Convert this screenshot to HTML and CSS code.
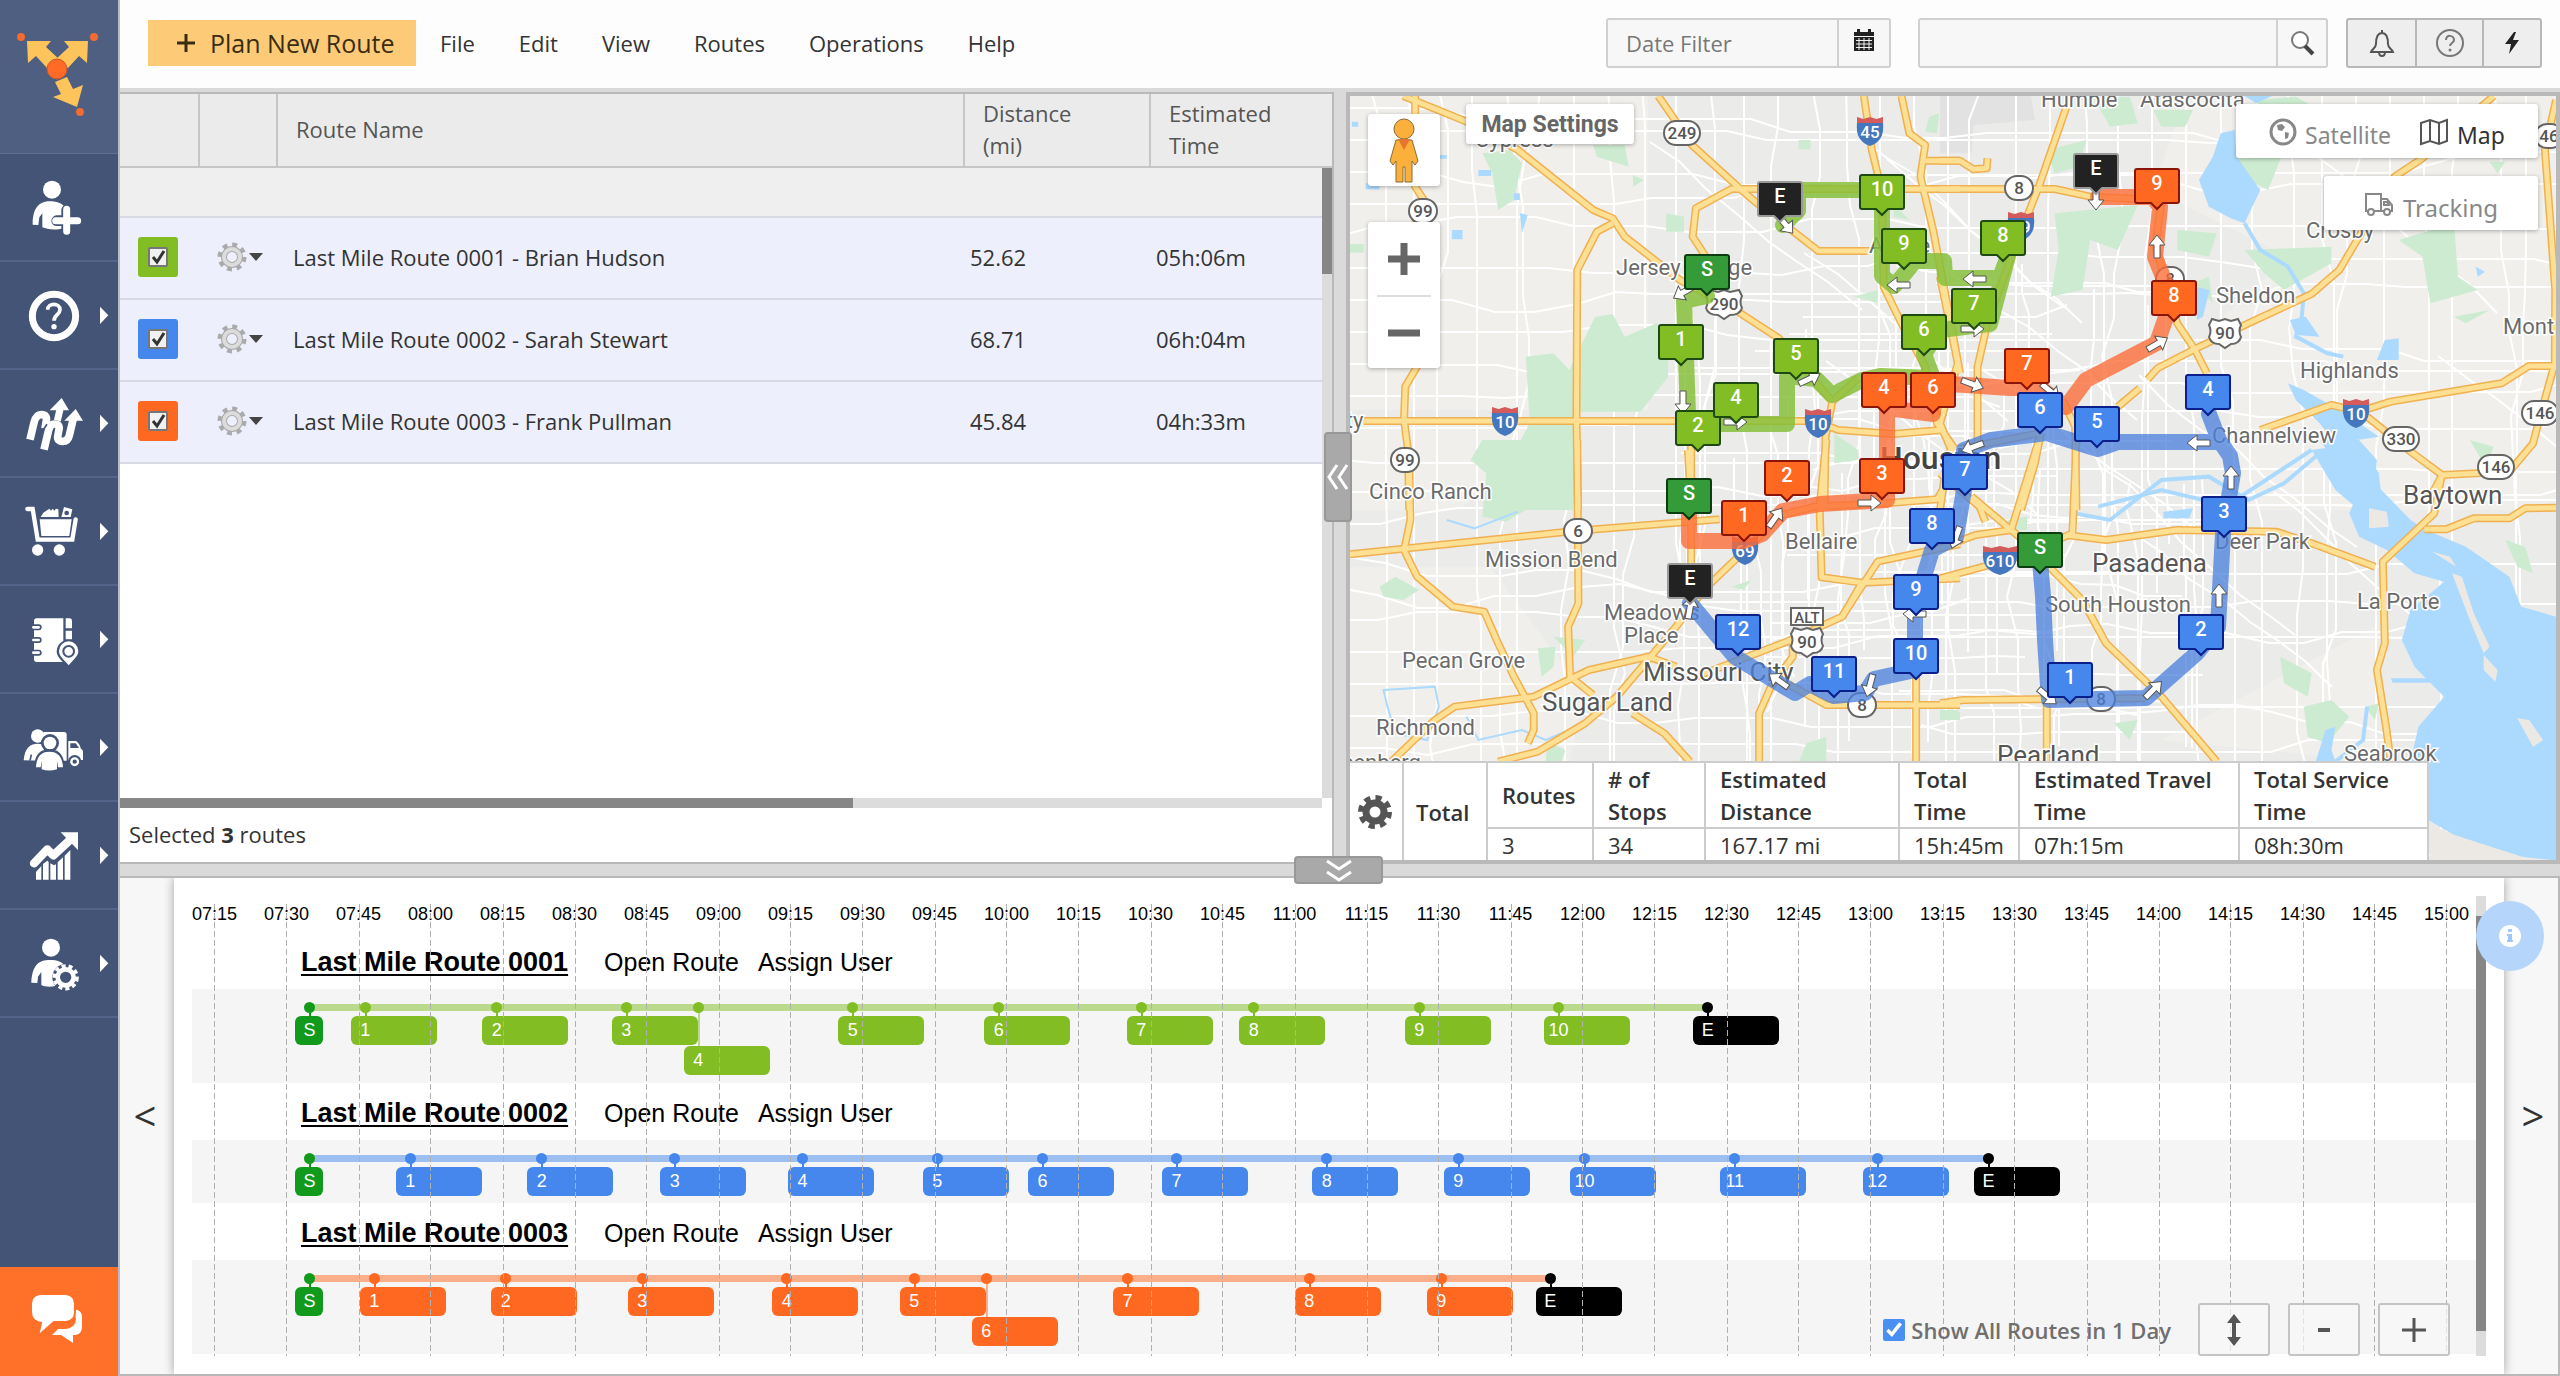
FILE: index.html
```html
<!DOCTYPE html>
<html lang="en">
<head>
<meta charset="utf-8">
<meta name="viewport" content="width=device-width, initial-scale=1">
<title>Route Planner</title>
<link rel="stylesheet" href="styles.css">
</head>
<body>
<nav class="sidebar" aria-label="Main">
  <a class="logo" href="#" aria-label="Home">
    <svg viewBox="0 0 120 154" width="120" height="154">
      <g fill="#fdc45c"><path d="M27 41H51L46 47L60 60L47 68L36 56L28 63Z"/><path d="M88 41H64L69 47L55 60L68 68L79 56L87 63Z"/><path d="M55 82L67 77L73 89L83 85L77 107L53 97L61 94Z"/></g>
      <circle cx="57" cy="69" r="10" fill="#ff6a26" stroke="#c85a2a"/>
      <g fill="#f26b32"><circle cx="21" cy="37" r="4"/><circle cx="94" cy="37" r="4"/><circle cx="80" cy="112" r="4"/></g>
    </svg>
  </a>
  <button class="side-item" aria-label="Add user">
    <svg viewBox="0 0 360 324"><circle cx="156" cy="107" r="27"/><path d="M98 212C98 160 118 142 150 142C172 142 190 150 192 158V190H160V212H190V222C170 230 140 226 127 220V178L118 190L115 213Z"/><g stroke="#445476" stroke-width="32" stroke-linecap="round"><path d="M200 168V232M170 200H232"/></g><g stroke="#fff" stroke-width="21" stroke-linecap="round"><path d="M200 166V232M167 200H233"/></g></svg>
  </button>
  <button class="side-item" aria-label="Help">
    <svg viewBox="0 0 360 324"><circle cx="162" cy="162" r="65" fill="none" stroke="#fff" stroke-width="21"/><path d="M143 143C143 122 180 122 180 143C180 158 162 158 162 176" fill="none" stroke="#fff" stroke-width="11"/><circle cx="162" cy="194" r="8"/><path d="M300 134L325 160L300 186Z"/></svg>
  </button>
  <button class="side-item" aria-label="Routes">
    <svg viewBox="0 0 360 324"><g fill="none" stroke="#fff" stroke-width="23"><path d="M90 209L102 158Q108 134 124 134Q142 134 139 152L135 176"/><path d="M132 239L146 180Q150 162 164 162Q180 162 177 178L173 200Q172 214 188 214Q204 214 208 196L220 146"/><path d="M172 152L180 118" stroke-width="21"/></g><path d="M185 84L207 121H149Z"/><path d="M227 117L249 152H193Z"/><path d="M128 182L141 163" stroke="#445476" stroke-width="5"/><path d="M300 134L325 160L300 186Z"/></svg>
  </button>
  <button class="side-item" aria-label="Orders">
    <svg viewBox="0 0 360 324"><path d="M82 93H98L113 185H217L227 124" fill="none" stroke="#fff" stroke-width="13" stroke-linecap="round"/><path d="M119 124H215L208 174H124Z"/><path d="M122 117L130 104L148 92L153 98L158 92L163 98L168 92L175 94L176 117Z"/><path d="M192 87L217 94L212 117H184Z"/><circle cx="200" cy="105" r="7" fill="#445476"/><circle cx="113" cy="216" r="17"/><circle cx="178" cy="216" r="17"/><path d="M300 134L325 160L300 186Z"/></svg>
  </button>
  <button class="side-item" aria-label="Address book">
    <svg viewBox="0 0 360 324"><path d="M110 97H190V228H110Q102 228 102 220V105Q102 97 110 97ZM197 97H210Q216 98 216 105V127H197ZM197 134H216V160H197Z"/><g stroke="#445476" stroke-width="18" stroke-linecap="round"><path d="M104 124H116M104 162H116M104 200H116"/></g><g stroke="#fff" stroke-width="8" stroke-linecap="round"><path d="M100 124H116M100 162H116M100 200H116"/></g><path d="M206 246C190 228 170 214 170 197A36 36 0 0 1 242 197C242 214 222 228 206 246Z" fill="#445476"/><path d="M206 238C194 222 177 212 177 195A29 29 0 0 1 235 195C235 212 218 222 206 238Z"/><circle cx="206" cy="196" r="16" fill="none" stroke="#445476" stroke-width="6"/><path d="M300 134L325 160L300 186Z"/></svg>
  </button>
  <button class="side-item" aria-label="Team">
    <svg viewBox="0 0 360 324"><path d="M130 114H192Q200 114 200 122V200H130ZM205 141H228Q240 150 242 163L249 170V198H205Z"/><path d="M211 148H227L237 162H211Z" fill="#445476"/><circle cx="224" cy="203" r="20" fill="#445476"/><circle cx="224" cy="203" r="10" fill="none" stroke="#fff" stroke-width="7"/><circle cx="113" cy="126" r="20"/><path d="M71 199C74 160 92 149 113 149C124 149 132 152 138 158L128 200Z"/><path d="M90 200L94 182" stroke="#445476" stroke-width="5"/><circle cx="150" cy="147" r="27" fill="#445476"/><circle cx="150" cy="147" r="19"/><path d="M102 224C102 178 125 166 148 166C172 166 194 178 194 224L148 238Z" fill="#445476"/><path d="M108 220C110 184 126 173 148 173C170 173 187 184 189 220H174L171 200V226C155 231 140 231 125 226V200L122 220Z"/><path d="M300 134L325 160L300 186Z"/></svg>
  </button>
  <button class="side-item" aria-label="Analytics">
    <svg viewBox="0 0 360 324"><path d="M102 184L142 142L160 160L212 112" fill="none" stroke="#fff" stroke-width="25" stroke-linecap="round" stroke-linejoin="round"/><path d="M182 91H234V144Z"/><path d="M108 210L124 192V233H108ZM129 186L142 176L146 180V233H129ZM151 184L162 190L168 187V233H151ZM173 181L189 166V233H173ZM194 161L211 144V233H194Z"/><path d="M300 134L325 160L300 186Z"/></svg>
  </button>
  <button class="side-item" aria-label="Account settings">
    <svg viewBox="0 0 360 324"><circle cx="153" cy="113" r="27"/><path d="M94 218C96 166 116 150 150 150C172 150 188 156 192 166L160 200L166 228C150 232 132 230 124 225V186L114 200L112 219Z"/><circle cx="197" cy="202" r="40" fill="#445476"/><circle cx="197" cy="202" r="24" fill="none" stroke="#fff" stroke-width="14"/><circle cx="197" cy="202" r="34" fill="none" stroke="#fff" stroke-width="11" stroke-dasharray="12 9"/><path d="M300 134L325 160L300 186Z"/></svg>
  </button>
  <button class="chat" aria-label="Chat">
    <svg viewBox="0 0 120 109"><path d="M74 42Q82 43 82 50V60Q82 67 75 68H73V76L61 68H52L58 62H66Q76 60 76 52Z"/><path d="M40 27H66Q75 28 75 37V45Q75 54 66 55H54L38 69L41 56Q31 54 31 45V37Q31 28 40 27Z" stroke="#ff7029" stroke-width="2"/></svg>
  </button>
</nav>

<div class="main">
  <header class="topbar">
    <button class="plan"><svg viewBox="0 0 20 20" width="20" height="20"><path d="M10 1V19M1 10H19" stroke="#3a2c10" stroke-width="3"/></svg>Plan New Route</button>
    <nav class="menu" aria-label="Menu bar">
      <a href="#">File</a><a href="#">Edit</a><a href="#">View</a><a href="#">Routes</a><a href="#">Operations</a><a href="#">Help</a>
    </nav>
    <div class="tools">
      <div class="field date">
        <input type="text" placeholder="Date Filter" aria-label="Date Filter">
        <button aria-label="Open calendar"><svg viewBox="0 0 22 24" width="22" height="24"><path d="M1 4H4V1H7V4H15V1H18V4H21V8H1ZM1 9H21V23H1Z" fill="#222"/><path d="M3 12.500H19M3 16H19M3 19.500H19M6 10V22M11 10V22M16 10V22" stroke="#f2f2f2" stroke-width="1"/></svg></button>
      </div>
      <div class="field search">
        <input type="text" aria-label="Search">
        <button aria-label="Search"><svg viewBox="0 0 26 26" width="26" height="26"><circle cx="11" cy="10" r="8" fill="#fff" stroke="#777" stroke-width="2"/><path d="M16 16L24 24" stroke="#444" stroke-width="4"/></svg></button>
      </div>
      <div class="group">
        <button aria-label="Notifications"><svg viewBox="0 0 28 30" width="28" height="30"><path d="M14 2V5M14 5C8 5 8 12 8 16C8 20 4 21 3 24H25C24 21 20 20 20 16C20 12 20 5 14 5ZM11 24Q11 28 14 28Q17 28 17 24" fill="none" stroke="#555" stroke-width="2"/></svg></button>
        <button aria-label="Help"><svg viewBox="0 0 30 30" width="30" height="30"><circle cx="15" cy="15" r="13" fill="none" stroke="#777" stroke-width="2"/><path d="M11 12C11 6 19 7 19 12C19 15 15 15 15 18" fill="none" stroke="#777" stroke-width="2"/><circle cx="15" cy="22" r="1.500" fill="#777"/></svg></button>
        <button aria-label="Quick actions"><svg viewBox="0 0 20 24" width="20" height="24"><path d="M12 1L3 13H9L7 23L17 9H11L14 1Z" fill="#222"/></svg></button>
      </div>
    </div>
  </header>

  <div class="work">
    <section class="routes">
      <div class="table-wrap">
        <table class="route-table">
          <colgroup><col class="c-check"><col class="c-gear"><col><col class="c-dist"><col class="c-time"></colgroup>
          <thead>
            <tr><th></th><th></th><th>Route Name</th><th>Distance<br>(mi)</th><th>Estimated<br>Time</th></tr>
          </thead>
          <tbody id="route-rows">
            <tr class="filter"><td colspan="5"></td></tr>
          </tbody>
        </table>
        <div class="vscroll"><div></div></div>
      </div>
      <div class="hscroll"><div></div></div>
      <p class="selected">Selected <b>3</b> routes</p>
    </section>
    <div class="splitter"><button aria-label="Collapse list"><svg viewBox="0 0 24 28" width="24" height="28"><path d="M11 2L3 14L11 26M21 2L13 14L21 26" fill="none" stroke="#fff" stroke-width="3"/></svg></button></div>
    <section class="map">
      <svg class="map-canvas" viewBox="0 0 1206 764" preserveAspectRatio="xMidYMid slice">
        <defs>
          <g id="highways">
            <g class="tile nw">
              <path d="M160 18L320 95L450 180L640 360L690 385L720 440L860 570L1000 660L1110 745L1245 935"/>
              <path d="M805 18L850 95L890 165L1020 305L1060 345"/>
              <path d="M190 18V290L212 330L185 420L200 820L165 890L162 990L172 1080L175 1260"/>
              <path d="M1568 297H990L900 355L892 440L925 500"/>
              <path d="M880 1080L888 1260"/>
              <path d="M690 400L650 425L600 540L598 990L602 1260"/>
              <path d="M60 993H1200L1260 1020L1400 1032L1520 1020L1500 950"/>
              <path d="M1325 18L1345 180L1370 300L1375 590L1420 700L1480 830L1510 1000L1568 1100"/>
              <path d="M1420 18L1440 130L1480 165L1468 260L1500 420L1545 700L1568 850"/>
              <path d="M1480 212H1568"/>
              <path d="M1310 865L1245 935L1228 1040L1225 1260"/>
              <path class="minor" d="M1120 400L1210 483H1340"/>
            </g>
            <g class="tile ne">
              <path d="M0 212H50L85 238L118 235L120 205"/>
              <path d="M320 50L250 290L180 500L120 700L95 830V1080"/>
              <path d="M0 297H290L380 320L560 330L545 470L600 700L645 780L675 850"/>
              <path d="M450 950L505 895M525 868L550 835L640 780L780 700L940 612L1010 540L1055 450L1150 260L1220 205L1400 18"/>
              <path d="M810 1020L990 945L1060 965L1140 935L1420 880L1490 828H1558"/>
              <path d="M1080 980L1190 1085L1270 1155L1440 1145L1500 1060L1515 990L1555 820L1556 600L1530 180L1558 30"/>
              <path d="M1270 1155L1245 1210"/>
              <path d="M310 930L342 1010L345 1260"/>
              <path d="M255 1030L240 1120L205 1260"/>
              <path d="M0 560L45 820L0 1000L30 1085"/>
              <path d="M0 1260L20 1090L60 1075L250 1030"/>
            </g>
            <g class="tile sw">
              <path d="M175 60L178 240L162 330L195 410L285 500L365 515L400 610L440 710L490 820V870L475 910"/>
              <path d="M25 343L600 272L960 238"/>
              <path d="M600 0L603 490L577 560L582 710L640 765"/>
              <path d="M1110 225L1060 290L920 450L850 560L700 770L620 850L500 935L400 965"/>
              <path d="M888 0V480"/>
              <path d="M130 965L240 840L290 800L490 770L630 690L780 650L850 680"/>
              <path d="M900 710L1130 605L1270 530L1360 365L1568 312"/>
              <path d="M740 820L820 880L885 965"/>
              <path d="M1060 965V820L1090 740L1145 650V600"/>
              <path d="M1130 730L1230 795H1568"/>
              <path d="M1457 690V965"/>
              <path d="M1230 0L1213 200L1218 412L1320 428L1568 415"/>
              <path d="M1320 428L1270 530"/>
              <path d="M1100 230L1200 200L1380 190L1510 178L1550 100"/>
            </g>
            <g class="tile se">
              <path d="M0 790L60 780L520 775"/>
              <path d="M270 790V965"/>
              <path d="M80 170L200 290L360 480L420 610L560 770L700 965"/>
              <path d="M0 325L90 285L180 270L250 0"/>
              <path d="M0 415L110 380L200 350L335 280L345 0"/>
              <path d="M320 285L420 300L600 270L850 275L940 310L1100 380"/>
              <path d="M1270 100L1250 220L1120 365L1125 610L1105 690L1128 860L1140 965"/>
              <path d="M1225 268H1280L1350 235H1440L1480 205L1558 203"/>
              <path d="M0 100L100 200L115 245"/>
            </g>
          </g>
        </defs>
        <rect width="1206" height="764" fill="#ebebea"/>
        <g class="tile nw" fill="#f0efec"><path d="M0 0H780V960H0Z"/><path d="M0 1000H560L300 1260H0Z"/></g>
        <g class="tile ne" fill="#f0efec"><path d="M620 18H1568V1260H760L700 700L880 500L540 300Z"/></g>
        <g class="tile sw" fill="#f0efec"><path d="M0 380H380L620 760L580 965H0Z"/></g>
        <g class="tile se" fill="#f0efec"><path d="M560 900L1100 560L1100 965Z"/></g>
        <g class="tile ne" fill="#e2e2e3"><path d="M0 18H230L240 90L85 105L80 190H0Z"/></g>
        <g id="streets" class="streets"></g>
        <g class="green">
          <g class="tile nw">
            <path d="M645 680L690 672L720 740L800 700L830 720V860L760 965H600L590 1260H360L480 1000L470 800L540 790L580 840Z"/>
            <path d="M360 190L430 180L460 220L440 330L400 360L385 250Z"/><path d="M640 165H720L730 230L650 200Z"/><path d="M825 370L870 380V425H825Z"/><path d="M740 255L768 270L742 290Z"/><path d="M1490 80L1515 70L1510 130L1480 125Z"/><path d="M1400 340L1440 390L1400 380Z"/><path d="M1250 1030L1310 1080V1110L1250 1120Z"/><path d="M25 462H60V488H25Z"/><path d="M1160 150H1190V178H1160Z"/><path d="M1300 620L1360 600V640Z"/>
          </g>
          <g class="tile ne">
            <path d="M390 25L480 20L500 100L430 110Z"/><path d="M270 180L370 150L350 230L290 250Z"/><path d="M290 370L500 345L450 480L380 450L360 600L280 620L300 480Z"/><path d="M540 60H640L620 110H560Z"/><path d="M760 120L860 70L980 100L970 170L870 180L830 300L740 250Z"/><path d="M770 480L990 470V520L870 600L820 550Z"/><path d="M800 30L900 20L960 60L820 80Z"/><path d="M1160 450L1300 400L1310 560L1360 600L1240 640L1220 500Z"/><path d="M1300 680L1390 660L1330 700Z"/><path d="M600 420L700 430L680 500L600 480Z"/><path d="M640 580L680 560L690 640Z"/><path d="M1390 215H1430L1410 250Z"/><path d="M1340 1050L1400 1070L1380 1130Z"/>
          </g>
          <g class="tile sw">
            <path d="M590 0H360L330 60L370 100L360 230L420 245L540 160L590 100Z"/><path d="M100 440L140 410L200 450L160 480L110 470Z"/><path d="M500 625L545 620L540 680L510 710Z"/><path d="M540 590L620 600L590 650Z"/><path d="M1180 910L1230 890V965H1160Z"/><path d="M990 440L1040 420L1020 450Z"/><path d="M525 905L570 930L560 965H520Z"/><path d="M1525 815H1568V840H1530Z"/>
          </g>
          <g class="tile se">
            <path d="M860 650L940 700L930 770L870 730Z"/><path d="M920 800L990 780L1035 830L980 910L930 890Z"/><path d="M1050 50L1100 70L1070 120L1040 100Z"/><path d="M440 850L500 840L480 900Z"/><path d="M1430 300L1480 320L1500 400L1460 380Z"/><path d="M170 240L220 230V270H180Z"/><path d="M0 810H45V840H0Z"/><path d="M1075 800L1110 790L1100 840Z"/>
          </g>
        </g>
        <g class="water">
          <g class="tile ne">
            <path d="M710 130L745 120L750 200L810 300L770 400L735 385L680 350L655 270L690 200Z"/><path d="M770 18H840L800 40Z"/><path d="M880 880L920 900L1010 960L1110 1040L1000 1060L960 1000L900 930Z"/><path d="M940 1080L1060 1060L1110 1150L1120 1260H1060L1000 1200Z"/><path d="M885 690L925 680L960 740L900 735Z"/><path d="M1125 750L1160 745V810L1105 810Z"/><path d="M1355 530L1378 545L1360 560Z"/><path d="M645 590L682 600L665 680L650 690Z"/>
            <path class="river" d="M770 400L810 480L880 530L920 610L915 680L900 740L980 790L1020 800"/><path class="river" d="M940 1080L850 1150L760 1220L700 1240L560 1200L400 1250"/>
          </g>
          <g class="tile se">
            <path d="M960 0H1060L1105 60L1100 130L1190 240L1230 270L1330 320L1440 410L1470 500L1558 530V1262L1470 1250L1300 1185L1235 1140V965H1190L1210 860L1275 770L1200 680L1168 600L1190 510L1275 425L1200 400L1130 330L1060 290L1035 220L1060 150L1020 100Z"/>
            <path d="M1140 715H1240V728H1145Z"/><path d="M975 870L1000 860L990 930L1000 965H950Z"/><path d="M565 215L640 205L630 235H565Z"/>
            <path class="river" d="M340 220L430 240L560 120L680 110L780 180L870 130L960 40"/><path class="river" d="M1080 800L1070 900L1000 965"/>
          </g>
          <g class="tile nw">
            <path d="M283 420H310V448H283ZM30 95H46V110H30ZM350 240H382V258H350ZM455 370L475 375L460 430Z"/><path d="M65 280H100V298H65Z"/><path d="M245 195H270V206H245ZM440 310H455V330H440Z"/>
          </g>
          <g class="tile sw">
            <path class="river thin" d="M110 750L240 740L250 800L220 900L140 880L120 800Z"/><path class="river thin" d="M320 830L350 900L460 870L520 900L600 860"/><path class="river thin" d="M270 240L340 265L450 215"/>
          </g>
        </g>
        <g class="tile se" fill="#ece9e4"><path d="M1085 205L1130 215L1135 260L1085 265Z"/><path d="M1295 400L1320 410L1350 520L1390 620L1375 640L1340 540Z"/><path d="M1375 645L1410 690L1405 725L1375 690Z"/><path d="M1245 335L1290 350L1305 380Z"/><path d="M1460 835L1490 840L1525 900L1500 920Z"/><path d="M1235 1200V1150L1300 1185L1470 1250L1500 1262H1240Z"/></g>
        <use href="#highways" class="casing"/>
        <use href="#highways" class="surface"/>
        <g class="labels">
          <text x="125" y="51">Cypress</text><text x="266" y="179">Jersey Village</text><text x="19" y="403">Cinco Ranch</text><text x="135" y="471">Mission Bend</text>
          <text x="254" y="524">Meadows</text><text x="274" y="547">Place</text><text x="435" y="453">Bellaire</text><text x="52" y="572">Pecan Grove</text><text x="26" y="639">Richmond</text>
          <text x="-34" y="674">Rosenberg</text><text x="-30" y="332">Katy</text><text x="519" y="157">Aldine</text><text x="691" y="11">Humble</text><text x="790" y="11">Atascocita</text>
          <text x="956" y="142">Crosby</text><text x="866" y="207">Sheldon</text><text x="1153" y="238">Mont</text><text x="950" y="282">Highlands</text><text x="862" y="347">Channelview</text>
          <text x="865" y="453">Deer Park</text><text x="695" y="516">South Houston</text><text x="1007" y="513">La Porte</text><text x="994" y="665">Seabrook</text>
          <g class="town"><text x="293" y="585">Missouri City</text><text x="192" y="615">Sugar Land</text><text x="742" y="476">Pasadena</text><text x="1053" y="408">Baytown</text><text x="647" y="668">Pearland</text></g>
          <text class="city" x="530" y="373">Houston</text>
        </g>
        <g id="shields" class="shields"></g>
        <g class="trips">
          <path class="t1" d="M433 129L448 115V94H532V180L544 190L556 176L565 165H594L595 182H650L658 160L640 228L590 234L574 258L583 282L530 280L512 284L482 299L466 283L437 280V328H350L338 318L334 205L357 200"/>
          <path class="t3" d="M339 418V445H394L412 438L433 415L470 408L537 404V312L583 318L580 296L600 288L660 292L690 292L716 311L736 284L807 247L815 224L820 198L805 161L810 111L803 101H748"/>
          <path class="t2" d="M690 465L693 500L695 544L699 604L796 602L847 557L868 531L873 437L883 377L880 360L869 344L859 318M867 346H768L748 353L697 337L641 344L614 354V394L606 441L582 454L575 477L565 511V574L524 583L515 597L484 600L460 588L445 597L385 561L340 507"/>
        </g>
        <g id="arrows" class="arrows"></g>
        <g id="pins" class="pins"></g>
      </svg>

      <div class="map-left">
        <div class="map-tools">
          <button class="pegman" aria-label="Street View"><svg viewBox="0 0 32 66" width="32" height="66"><g fill="#fbb03b" stroke="#8a6a35" stroke-width="1"><path d="M8 23H24L30 44L27 48L24 44V65H17V50H15V65H8V44L5 48L2 44Z"/><circle cx="16" cy="12" r="10"/></g><path d="M10 22H22L16 33Z" fill="#e5762c"/></svg></button>
          <div class="zoom">
            <button aria-label="Zoom in"><svg viewBox="0 0 32 32" width="32" height="32"><path d="M16 0V32M0 16H32" stroke="#666" stroke-width="7"/></svg></button>
            <button aria-label="Zoom out"><svg viewBox="0 0 32 32" width="32" height="32"><path d="M0 16H32" stroke="#666" stroke-width="7"/></svg></button>
          </div>
        </div>
        <button class="settings">Map Settings</button>
      </div>
      <div class="map-right">
        <div class="layers">
          <button><svg viewBox="0 0 28 28" width="28" height="28"><circle cx="14" cy="14" r="12" fill="none" stroke="#888" stroke-width="3"/><path d="M8 7L13 6L16 9L13 13L9 12ZM16 14L20 15L19 20L16 21Z" fill="#888"/></svg>Satellite</button>
          <button class="on"><svg viewBox="0 0 30 28" width="30" height="28"><path d="M2 5L11 2L20 5L28 2V23L20 26L11 23L2 26ZM11 2V23M20 5V26" fill="none" stroke="#555" stroke-width="2"/></svg>Map</button>
        </div>
        <button class="tracking"><svg viewBox="0 0 30 24" width="30" height="24"><path d="M5 19H2V2H17V19H10M17 7H23L28 13V19H26M21 19H17M20 10H23L25 13H20Z" fill="none" stroke="#888" stroke-width="2"/><circle cx="7" cy="20" r="3" fill="#fff" stroke="#888" stroke-width="2"/><circle cx="23" cy="20" r="3" fill="#fff" stroke="#888" stroke-width="2"/></svg>Tracking</button>
      </div>

      <table class="summary">
        <tr>
          <th rowspan="2" class="s-gear"><button aria-label="Summary settings"><svg viewBox="0 0 36 36" width="36" height="36"><circle cx="18" cy="18" r="9" fill="none" stroke="#555" stroke-width="7"/><circle cx="18" cy="18" r="14" fill="none" stroke="#555" stroke-width="6" stroke-dasharray="6 5"/></svg></button></th>
          <th rowspan="2" class="s-total">Total</th><th class="s-routes">Routes</th><th class="s-stops"># of Stops</th><th class="s-dist">Estimated Distance</th><th class="s-time">Total Time</th><th class="s-travel">Estimated Travel Time</th><th class="s-service">Total Service Time</th>
        </tr>
        <tr><td>3</td><td>34</td><td>167.17 mi</td><td>15h:45m</td><td>07h:15m</td><td>08h:30m</td></tr>
      </table>
    </section>
  </div>

  <div class="hsplit"><button aria-label="Collapse timeline"><svg viewBox="0 0 28 26" width="28" height="26"><path d="M2 3L14 11L26 3M2 14L14 22L26 14" fill="none" stroke="#fff" stroke-width="3"/></svg></button></div>

  <section class="timeline">
    <button class="pan prev" aria-label="Earlier">&lt;</button>
    <div class="board">
      <div class="chart">
        <div class="hours" id="hours"></div>
        <div id="lanes"></div>
        <div class="chart-tools">
          <label><input type="checkbox" checked>Show All Routes in 1 Day</label>
          <button aria-label="Fit height"><svg viewBox="0 0 16 32" width="16" height="32"><path d="M8 0L15 9H10V23H15L8 32L1 23H6V9H1Z" fill="#555"/></svg></button>
          <button aria-label="Zoom out"><svg viewBox="0 0 24 24" width="24" height="24"><path d="M6 12H18" stroke="#555" stroke-width="4"/></svg></button>
          <button aria-label="Zoom in"><svg viewBox="0 0 24 24" width="24" height="24"><path d="M12 0V24M0 12H24" stroke="#555" stroke-width="3"/></svg></button>
        </div>
      </div>
      <div class="chart-scroll"><div></div></div>
    </div>
    <button class="pan next" aria-label="Later">&gt;</button>
    <button class="info" aria-label="Information"><svg viewBox="0 0 22 22" width="22" height="22"><circle cx="11" cy="11" r="11" fill="#fff"/><path d="M9 4H13V7H9ZM8 9H13V15H14V17H8V15H9V11H8Z" fill="#a0c8f6"/></svg></button>
  </section>
</div>
<script src="app.js"></script>
</body>
</html>
```
FILE: styles.css
```css
* { box-sizing: border-box; }
html, body { height: 100%; margin: 0; }
body { display: flex; background: #dadada; color: #333; font-family: "Open Sans", "Noto Sans", sans-serif; font-size: 22px; }
button { font: inherit; color: inherit; border: 0; background: none; padding: 0; cursor: pointer; }
a { color: inherit; text-decoration: none; }
svg { display: block; }

/* sidebar */
.sidebar { flex: 0 0 120px; display: flex; flex-direction: column; background: #445476; border-right: 2px solid #b9bcc6; min-height: 100%; overflow: hidden; }
.logo { background: #4e5f82; border-bottom: 1px solid #5f6f90; height: 154px; }
.side-item { height: 108px; border-bottom: 2px solid #53648a; }
.side-item svg { width: 120px; height: 108px; fill: #fff; }
.chat { height: 109px; margin-top: auto; background: #ff7029; }
.chat svg { width: 120px; height: 109px; fill: #fff; }

/* header */
.main { flex: 1; min-width: 0; display: flex; flex-direction: column; }
.topbar { display: flex; align-items: center; height: 88px; padding: 0 18px 2px 28px; background: #fdfdfd; }
.plan { display: flex; align-items: center; gap: 14px; height: 46px; width: 268px; padding: 0 0 0 28px; background: #fdcb78; color: #3a2c10; font-size: 25px; }
.menu { display: flex; gap: 44px; margin-left: 24px; }
.tools { display: flex; margin-left: auto; height: 50px; }
.field { display: flex; }
.field input { font: inherit; color: #555; background: #f7f7f7; border: 2px solid #d0d0d0; border-radius: 3px 0 0 3px; padding: 0 18px; min-width: 0; }
.field input::placeholder { color: #777; opacity: 1; }
.field button { display: grid; place-items: center; background: #f7f7f7; border: 2px solid #d0d0d0; border-left: 0; border-radius: 0 3px 3px 0; }
.date input { width: 233px; }
.date button { width: 52px; padding-bottom: 6px; }
.search { margin: 0 18px 0 27px; }
.search input { width: 360px; }
.search button { width: 50px; }
.group { display: flex; border: 2px solid #b8b8b8; border-radius: 3px; background: #eee; }
.group button { width: 67px; display: grid; place-items: center; }
.group button + button { border-left: 2px solid #b8b8b8; }
.group button:last-child { width: 58px; }

/* list and map */
.work { flex: 1; min-height: 600px; display: grid; grid-template-columns: minmax(0, 1fr) 12px minmax(0, 1fr); padding-top: 4px; }
.routes { display: flex; flex-direction: column; background: #fff; border: 2px solid #b9b9b9; border-left: 0; min-height: 0; }
.table-wrap { position: relative; flex: 1; }
.route-table { width: 100%; table-layout: fixed; border-collapse: separate; border-spacing: 0; }
.c-check { width: 78px; } .c-gear { width: 78px; } .c-dist { width: 186px; } .c-time { width: 183px; }
.route-table th { height: 74px; padding: 0 18px 2px; background: #ebebeb; border-bottom: 2px solid #c6c6c6; border-left: 2px solid #c6c6c6; font-weight: 400; text-align: left; line-height: 32px; color: #555; }
.route-table th:first-child { border-left: 0; }
.route-table td { height: 82px; padding: 0 7px 2px; background: #edeffd; border-bottom: 2px solid #d8dae3; color: #333; }
.route-table td:nth-child(3) { padding-left: 17px; }
.route-table .filter td { height: 50px; background: #efefef; }
.swatch { display: grid; place-items: center; width: 40px; height: 40px; margin-left: 11px; border-radius: 3px; }
.swatch input { appearance: none; margin: 0; width: 20px; height: 20px; border: 2px solid #777; border-radius: 2px; background: #f1f1f1 url('data:image/svg+xml,<svg xmlns="http://www.w3.org/2000/svg" viewBox="0 0 16 16"><path d="M3 8L7 13L14 2" fill="none" stroke="%23333" stroke-width="3"/></svg>'); }
.row-menu { display: flex; align-items: center; gap: 2px; padding-left: 12px; }
.vscroll { position: absolute; top: 74px; bottom: 0; right: 0; width: 10px; background: #dcdcdc; }
.vscroll div { height: 106px; background: #868686; }
.hscroll { height: 10px; background: #dcdcdc; margin-right: 10px; }
.hscroll div { height: 10px; width: 61%; background: #868686; }
.selected { margin: 0; padding: 10px 9px 0; line-height: 32px; height: 54px; }
.splitter { position: relative; z-index: 3; }
.splitter button { position: absolute; left: -10px; top: 44%; width: 28px; height: 90px; background: #a9a9a9; border: 2px solid #989898; border-radius: 4px; display: grid; place-items: center; }
.map { position: relative; border: 4px solid #b9b9b9; overflow: hidden; }
.map-canvas { position: absolute; inset: 0; width: 100%; height: 100%; }

.tile path { vector-effect: non-scaling-stroke; }
.nw { transform: matrix(.3954, 0, 0, .3333, -10, -6); }
.ne { transform: matrix(.3954, 0, 0, .3333, 590, -6); }
.sw { transform: matrix(.3954, 0, 0, .3333, -10, 344); }
.se { transform: matrix(.3954, 0, 0, .3333, 590, 344); }
.streets { fill: none; stroke: #fff; stroke-width: 2; }
.green { fill: #cdebd0; }
.water { fill: #acdaff; }
.water .river { fill: none; stroke: #acdaff; stroke-width: 4; }
.water .thin { stroke-width: 2; }
.casing, .surface { fill: none; stroke-linejoin: round; }
.casing { stroke: #f0b050; stroke-width: 8; }
.surface { stroke: #fde093; stroke-width: 5; }
.labels text { font: 22px Roboto, sans-serif; fill: #6b6b6b; stroke: #fff; stroke-width: 3; paint-order: stroke; }
.labels .town text { font-size: 26px; fill: #555; }
.labels .city { font-size: 32px; font-weight: 500; fill: #444; }
.shields text { font: 500 17px Roboto, sans-serif; text-anchor: middle; fill: #555; }
.shields .inter { fill: #fff; }
.trips { fill: none; stroke-width: 16; stroke-linejoin: round; stroke-linecap: round; }
.t1 { stroke: #86bf38; stroke-opacity: .84; } .t2 { stroke: #4a7fdb; stroke-opacity: .76; } .t3 { stroke: #fd6a35; stroke-opacity: .78; }
.arrows { fill: #fff; stroke: #555; stroke-width: 1; }
.pins text { font: 500 20px Roboto, sans-serif; fill: #fff; text-anchor: middle; }

.map-left { position: relative; float: left; display: flex; align-items: flex-start; gap: 26px; padding: 8px 0 0 18px; }
.map-tools { display: grid; gap: 36px; padding-top: 10px; }
.pegman, .zoom, .settings, .layers, .tracking { background: #fff; border-radius: 3px; box-shadow: 0 1px 4px rgba(0, 0, 0, .3); }
.pegman { width: 72px; height: 72px; display: grid; place-items: center; padding: 0; }
.zoom { width: 72px; padding: 0 9px; }
.zoom button { width: 54px; height: 73px; display: grid; place-items: center; }
.zoom button + button { border-top: 2px solid #ddd; }
.settings { height: 40px; width: 168px; font: 700 23px Roboto, sans-serif; color: #666; }
.map-right { position: relative; float: right; display: grid; justify-items: end; gap: 18px; padding: 8px 18px 0 0; }
.layers { display: flex; align-items: center; justify-content: center; gap: 28px; width: 302px; height: 54px; padding-top: 8px; color: #888; font-size: 23px; }
.layers button, .tracking { display: flex; align-items: center; gap: 8px; font-family: "Noto Sans", sans-serif; }
.layers .on { color: #333; }
.tracking { width: 214px; height: 54px; justify-content: center; padding-top: 8px; gap: 9px; color: #888; font-size: 24px; }
.layers svg, .tracking svg { margin-bottom: 6px; }

.summary { position: absolute; left: -3px; bottom: -3px; width: 1080px; table-layout: fixed; border-collapse: collapse; background: #fff; line-height: 32px; text-align: left; }
.summary th, .summary td { border: 2px solid #ccc; padding: 0 14px; font-weight: 400; }
.summary th { font-weight: 600; height: 66px; }
.summary td { height: 34px; }
.summary .s-gear { width: 55px; padding: 0; }
.s-gear button { display: grid; place-items: center; width: 52px; }
.summary .s-total { width: 84px; padding: 0 12px; }
.s-routes { width: 106px; } .s-stops { width: 112px; } .s-dist { width: 194px; } .s-time { width: 120px; } .s-travel { width: 220px; } .s-service { width: 189px; }

/* timeline */
.hsplit { position: relative; z-index: 4; height: 12px; }
.hsplit button { position: absolute; left: calc(50% - 46px); top: -8px; width: 89px; height: 28px; background: #a9a9a9; border: 2px solid #989898; border-radius: 4px; display: grid; place-items: center; }
.timeline { position: relative; display: grid; grid-template-columns: 54px minmax(0, 1fr) 54px; border: 2px solid #b9b9b9; border-left: 0; background: #f7f7f7; }
.pan { font-size: 40px; color: #333; padding-bottom: 22px; }
.prev { padding-right: 4px; }
.next { padding-left: 4px; }
.board { display: grid; grid-template-columns: minmax(0, 1fr) 10px; padding: 18px; background: #fff; box-shadow: 0 0 10px rgba(0, 0, 0, .35); clip-path: inset(0 -12px); }
.chart { position: relative; font-family: "Liberation Sans", Arial, sans-serif; color: #000; padding-bottom: 2px; }
.chart-scroll { background: #dcdcdc; padding: 20px 0 25px; }
.chart-scroll div { height: 100%; background: #868686; }
.hours { height: 36px; font-size: 18px; }
.hour { position: absolute; top: 8px; bottom: 0; display: flex; justify-content: center; width: 0; line-height: 20px; z-index: 1; }
.hour::after { content: ""; position: absolute; left: 0; top: 0; bottom: 0; width: 1px; background: repeating-linear-gradient(#b0b0b0 0 6px, transparent 6px 9px); }
.lane-head { display: flex; align-items: center; gap: 19px; height: 57px; padding: 4px 0 0 109px; font-size: 25px; }
.lane-head .name { font-size: 27px; font-weight: 700; text-decoration: underline; text-decoration-thickness: 2px; text-underline-offset: 3px; margin-right: 17px; }
.lane { position: relative; height: 63px; background: #f5f5f5; }
.lane.tall { height: 94px; }
.line { position: absolute; top: 15px; height: 7px; background: var(--c); opacity: .5; }
.stop { position: absolute; top: 13px; width: 86px; margin-left: -15px; padding-top: 14px; }
.stop span { display: block; height: 29px; border-radius: 6px; background: var(--c); color: #fff; font-size: 18px; line-height: 29px; }
.stop span b { display: block; width: 29px; text-align: center; font-weight: 400; }
.stop::before { content: ""; position: absolute; left: 9px; top: 0; width: 11px; height: 11px; border-radius: 50%; background: var(--c); }
.stop::after { content: ""; position: absolute; left: 14px; top: 6px; height: 8px; width: 2px; background: var(--c); }
.stop.low { padding-top: 44px; }
.stop.low::after { height: 38px; opacity: .5; }
.stop.start { width: 28px; --c: #119a1b; }
.stop.end { --c: #000; }
.chart-tools { position: absolute; right: 26px; bottom: 0; z-index: 2; display: flex; align-items: center; gap: 18px; color: #6f6f6f; font-family: "Open Sans", sans-serif; font-weight: 600; }
.chart-tools label { display: flex; align-items: center; gap: 6px; margin-right: 9px; }
.chart-tools input { width: 22px; height: 22px; margin: 0; accent-color: #4a90f2; }
.chart-tools button { width: 72px; height: 53px; display: grid; place-items: center; border: 2px solid #c4c4c4; border-radius: 3px; background: rgba(248, 248, 248, .7); }
.info { position: absolute; right: 14px; top: 23px; z-index: 3; width: 68px; height: 70px; border-radius: 50%; background: #b5d5fa; display: grid; place-items: center; }
```
FILE: app.js
```js
const GREEN = '#82bd24', BLUE = '#4587ed', ORANGE = '#ff6820';

// Route list
const routes = [
  { name: 'Last Mile Route 0001', driver: 'Brian Hudson', miles: '52.62', time: '05h:06m', color: GREEN,
    stops: [19.9, 31.5, 58.9, 85.9, 100.9, 133.1, 163.5, 193.2, 216.6, 251.1, 280.1, 311.2], low: 4 },
  { name: 'Last Mile Route 0002', driver: 'Sarah Stewart', miles: '68.71', time: '06h:04m', color: BLUE,
    stops: [19.9, 40.9, 68.3, 96, 122.6, 150.7, 172.6, 200.5, 231.8, 259.2, 285.5, 316.8, 346.5, 369.7] },
  { name: 'Last Mile Route 0003', driver: 'Frank Pullman', miles: '45.84', time: '04h:33m', color: ORANGE,
    stops: [19.9, 33.4, 60.8, 89.2, 119.3, 145.9, 160.9, 190.3, 228.2, 255.7, 278.4], low: 6 },
];
const gear = '<svg viewBox="0 0 30 30" width="30" height="30"><circle cx="15" cy="15" r="8" fill="none" stroke="#aaa" stroke-width="6"/><circle cx="15" cy="15" r="12" fill="none" stroke="#aaa" stroke-width="5" stroke-dasharray="4.700 4.700"/><circle cx="15" cy="15" r="8" fill="none" stroke="#dcdcdc" stroke-width="4"/></svg>';
document.getElementById('route-rows').insertAdjacentHTML('beforeend', routes.map(r => `
  <tr><td><label class="swatch" style="background:${r.color}"><input type="checkbox" checked aria-label="${r.name}"></label></td>
  <td><button class="row-menu" aria-label="Actions">${gear}<svg viewBox="0 0 14 8" width="14" height="8"><path d="M0 0H14L7 8Z" fill="#444"/></svg></button></td>
  <td>${r.name} - ${r.driver}</td><td>${r.miles}</td><td>${r.time}</td></tr>`).join(''));

// Timeline: minutes after 07:15, one hour is 288 units of the 2284-unit chart
const pos = m => ((m * 4.8 + 22.5) / 2284 * 100).toFixed(3) + '%';
let hours = '';
for (let i = 0; i < 32; i++) {
  const t = 435 + i * 15;
  hours += `<div class="hour" style="left:${pos(i * 15)}">${String(Math.floor(t / 60)).padStart(2, '0')}:${String(t % 60).padStart(2, '0')}</div>`;
}
document.getElementById('hours').innerHTML = hours;
document.getElementById('lanes').innerHTML = routes.map(r => {
  const last = r.stops.length - 1;
  const stops = r.stops.map((m, i) => `<div class="stop${i === 0 ? ' start' : i === last ? ' end' : ''}${i === r.low ? ' low' : ''}" style="left:${pos(m)}"><span><b>${i === 0 ? 'S' : i === last ? 'E' : i}</b></span></div>`).join('');
  return `<div class="lane-head"><a class="name" href="#">${r.name}</a><a href="#">Open Route</a><a href="#">Assign User</a></div>
  <div class="lane${r.low ? ' tall' : ''}" style="--c:${r.color}"><div class="line" style="left:${pos(r.stops[0])};width:${((r.stops[last] - r.stops[0]) * 4.8 / 22.84).toFixed(3)}%"></div>${stops}</div>`;
}).join('');

// Street grid: jogged lines, denser in the city
let seed = 7;
const rnd = () => (seed = (seed * 16807) % 2147483647) / 2147483647;
let streets = '';
function street(x, y, dx, dy, n) {
  let d = `M${x | 0} ${y | 0}`;
  for (let i = 0; i < n; i++) {
    x += dx + (dx ? rnd() * 12 : (rnd() < .25 ? (rnd() - .5) * 26 : 0));
    y += dy + (dy ? rnd() * 12 : (rnd() < .25 ? (rnd() - .5) * 26 : 0));
    d += `L${x | 0} ${y | 0}`;
  }
  streets += `<path d="${d}"/>`;
}
for (let x = 20; x < 1206; x += 34) street(x, -10, 0, 34, 22);
for (let y = 12; y < 764; y += 32) street(-10, y, 34, 0, 34);
for (let x = 330; x < 860; x += 18) street(x, 150 + rnd() * 260, 0, 22, 10);
for (let y = 170; y < 640; y += 17) street(330 + rnd() * 260, y, 28, 0, 8);
for (let i = 0; i < 14; i++) street(rnd() * 1100, rnd() * 500, 24, 18, 7);
document.getElementById('streets').innerHTML = streets;

// Road shields
const oval = [[332,37,249],[73,115,99],[55,364,99],[228,435,6],[669,92,8],[512,609,8],[751,603,8],[1051,343,330],[1190,317,146],[1146,371,146],[1199,40,46],[820,183,8]];
const inter = [[520,35,45],[155,325,10],[468,327,10],[1006,317,10],[395,454,69],[650,464,610],[671,130,69]];
const us = [[374,208,290],[875,237,90],[457,546,90]];
document.getElementById('shields').innerHTML =
  oval.map(([x, y, t]) => { const w = t > 99 ? 36 : 28; return `<rect x="${x - w / 2}" y="${y - 12}" width="${w}" height="24" rx="12" fill="#fff" stroke="#666" stroke-width="2"/><text x="${x}" y="${y + 6}">${t}</text>`; }).join('') +
  inter.map(([x, y, t]) => { const w = t > 99 ? 17 : 13; return `<path d="M${x - w} ${y - 8}H${x + w}Q${x + w + 2} ${y + 10} ${x} ${y + 15}Q${x - w - 2} ${y + 10} ${x - w} ${y - 8}Z" fill="#4477bd"/><path d="M${x - w} ${y - 14}L${x - w / 2} ${y - 12}L${x} ${y - 14}L${x + w / 2} ${y - 12}L${x + w} ${y - 14}V${y - 8}H${x - w}Z" fill="#d35b5b"/><text class="inter" x="${x}" y="${y + 7}">${t}</text>`; }).join('') +
  us.map(([x, y, t]) => { const w = t > 99 ? 18 : 16; return `<path d="M${x - w + 3} ${y - 14}L${x - 6} ${y - 12}L${x} ${y - 14}L${x + 6} ${y - 12}L${x + w - 3} ${y - 14}L${x + w} ${y - 8}Q${x + w - 3} ${y - 2} ${x + w} ${y + 4}Q${x + w - 2} ${y + 11} ${x + 6} ${y + 11}L${x} ${y + 15}L${x - 6} ${y + 11}Q${x - w + 2} ${y + 11} ${x - w} ${y + 4}Q${x - w + 3} ${y - 2} ${x - w} ${y - 8}Z" fill="#fff" stroke="#666" stroke-width="2"/><text x="${x}" y="${y + 6}">${t}</text>`; }).join('') +
  '<rect x="441" y="512" width="32" height="17" fill="#fff" stroke="#666" stroke-width="2"/><text x="457" y="527" style="font-size:15px">ALT</text>';

// Travel direction arrows: x, y, angle
const arrows = [[435,128,50],[549,189,180],[625,183,180],[334,196,150],[459,283,-25],[385,326,0],[333,306,90],[622,288,20],[622,233,0],[700,295,40],[807,151,-90],[807,248,-30],[746,102,90],[849,347,180],[623,351,160],[881,382,-90],[869,500,-90],[803,594,-45],[520,589,105],[429,585,-145],[519,407,0],[425,422,-55],[606,441,110],[565,518,180],[340,512,-80],[697,600,40]];
document.getElementById('arrows').innerHTML = arrows.map(([x, y, a]) => `<path transform="translate(${x} ${y}) rotate(${a})" d="M-11 -3H2V-8L12 0L2 8V3H-11Z"/>`).join('');

// Pins: x centre, top, label, colour
const S = '#359a38', K = '#222';
const pins = [
  [430,85,'E',K],[532,78,10,GREEN],[554,132,9,GREEN],[653,124,8,GREEN],[624,192,7,GREEN],[574,218,6,GREEN],[357,158,'S',S],[331,228,1,GREEN],[446,242,5,GREEN],[348,314,2,GREEN],[386,286,4,GREEN],
  [746,57,'E',K],[807,72,9,ORANGE],[824,184,8,ORANGE],[677,252,7,ORANGE],[583,276,6,ORANGE],[534,276,4,ORANGE],[532,362,3,ORANGE],[437,364,2,ORANGE],[394,404,1,ORANGE],[339,382,'S',S],
  [858,278,4,BLUE],[747,310,5,BLUE],[690,296,6,BLUE],[615,358,7,BLUE],[582,412,8,BLUE],[566,478,9,BLUE],[566,542,10,BLUE],[484,560,11,BLUE],[388,518,12,BLUE],[874,400,3,BLUE],[851,518,2,BLUE],[720,566,1,BLUE],[690,436,'S',S],[340,467,'E',K],
];
const edge = { [GREEN]: '#1d4a12', [BLUE]: '#0a1f8a', [ORANGE]: '#8a1408', [S]: '#0c3d10', [K]: '#999' };
document.getElementById('pins').innerHTML = pins.map(([x, y, t, c]) => `<path d="M${x - 20} ${y + 1}H${x + 20}Q${x + 22} ${y + 1} ${x + 22} ${y + 3}V${y + 33}Q${x + 22} ${y + 35} ${x + 20} ${y + 35}H${x + 6}L${x} ${y + 41}L${x - 6} ${y + 35}H${x - 20}Q${x - 22} ${y + 35} ${x - 22} ${y + 33}V${y + 3}Q${x - 22} ${y + 1} ${x - 20} ${y + 1}Z" fill="${c}" stroke="${edge[c]}" stroke-width="2"/><text x="${x}" y="${y + 22}">${t}</text>`).join('');
```
